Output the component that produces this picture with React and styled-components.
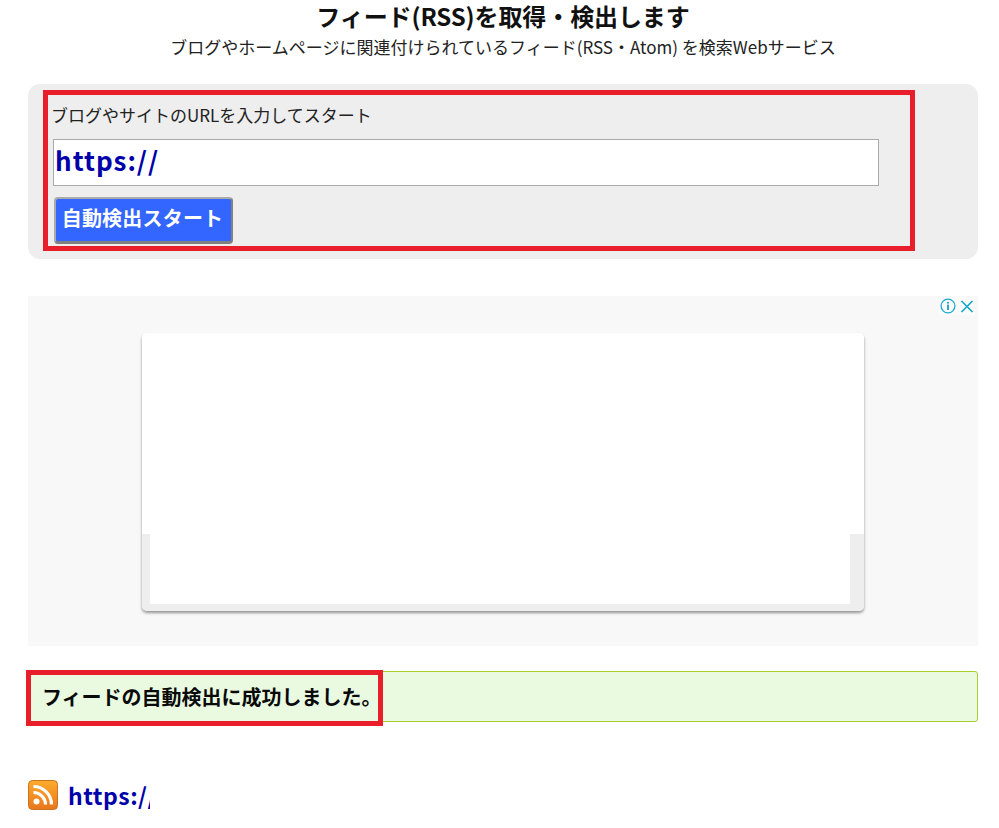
import React from 'react';
import styled, { createGlobalStyle } from 'styled-components';

const Global = createGlobalStyle`
  html, body { margin: 0; padding: 0; background: #fff; }
  body { font-family: "Noto Sans CJK JP", "Noto Sans", sans-serif; color: #111; }
`;

const Page = styled.div`
  width: 950px;
  margin-left: 28px;
  position: relative;
`;
const Header = styled.header`
  text-align: center;
  height: 84px;
`;
const Title = styled.h1`
  margin: 0;
  font-size: 24px;
  line-height: 32px;
  font-weight: 700;
  letter-spacing: -0.1px;
  color: #111;
`;
const Sub = styled.p`
  margin: 2px 0 0;
  font-size: 17px;
  line-height: 26px;
  color: #222;
`;
const FormPanel = styled.section`
  position: relative;
  height: 175px;
  box-sizing: border-box;
  background: #eee;
  border-radius: 12px;
  padding: 19px 99px 0 24px;
`;
const Label = styled.div`
  font-size: 17px;
  line-height: 24px;
  margin-left: -1px;
  color: #222;
`;
const UrlField = styled.div`
  margin: 12px 0 0 1px;
  height: 47px;
  box-sizing: border-box;
  border: 1px solid #aaa;
  background: #fff;
  padding-left: 1px;
  font-size: 26px;
  line-height: 40px;
  font-weight: 700;
  color: #0000aa;
  letter-spacing: 1px;
`;
const StartButton = styled.button`
  display: block;
  margin: 11px 0 0 2px;
  width: 179px;
  height: 47px;
  box-sizing: border-box;
  border: 2px solid #808080;
  border-top-color: #aaa;
  border-left-color: #aaa;
  border-bottom-width: 3px;
  border-radius: 4px;
  background: #3366ff;
  color: #fff;
  font-family: inherit;
  font-size: 20px;
  font-weight: 700;
  letter-spacing: 0.2px;
  padding: 0 2px 5px 0;
  text-align: center;
`;
const Mark = styled.div`
  position: absolute;
  box-sizing: border-box;
  border: 5px solid #e81f2b;
  pointer-events: none;
  left: ${p => p.$left}px;
  top: ${p => p.$top}px;
  width: ${p => p.$w}px;
  height: ${p => p.$h}px;
`;
const AdArea = styled.div`
  position: relative;
  margin-top: 37px;
  height: 350px;
  background: #f8f8f8;
  padding-top: 37px;
  box-sizing: border-box;
`;
const AdCard = styled.div`
  width: 722px;
  height: 278px;
  margin-left: 114px;
  box-sizing: border-box;
  background: #fff;
  border-radius: 5px;
  box-shadow: 0 2px 3px rgba(0,0,0,.4);
  position: relative;
  overflow: hidden;
  display: flex;
  flex-direction: column;
`;
const AdTop = styled.div`
  height: 201px;
  background: #fff;
`;
const AdFrame = styled.div`
  flex: 1;
  background: #eee;
  padding: 0 14px 7px 8px;
  display: flex;
`;
const AdInner = styled.div`
  flex: 1;
  background: #fff;
`;
const AdIcons = styled.div`
  position: absolute;
  top: 1px;
  right: 3px;
  display: flex;
  gap: 4px;
  align-items: center;
  background: rgba(255,255,255,.45);
  padding: 0 1px;
  height: 18px;
`;
const Alert = styled.div`
  margin-top: 25px;
  height: 51px;
  box-sizing: border-box;
  background: #e9fae0;
  border: 1px solid #a6cf2e;
  border-radius: 3px;
  padding-left: 13px;
  font-size: 20px;
  font-weight: 700;
  line-height: 50px;
  color: #0a0a0a;
`;
const FeedRow = styled.div`
  margin-top: 57px;
  display: flex;
  align-items: center;
  gap: 10px;
`;
const FeedLink = styled.a`
  display: block;
  width: 82px;
  overflow: hidden;
  white-space: nowrap;
  font-size: 23px;
  line-height: 30px;
  font-weight: 700;
  letter-spacing: 0.5px;
  color: #0000aa;
  margin-top: 1px;
`;

const RssIcon = () => (
  <svg width="30" height="30" viewBox="0 0 30 30">
    <defs>
      <linearGradient id="rssg" x1="0" y1="0" x2="0" y2="1">
        <stop offset="0" stopColor="#fcab2d" />
        <stop offset="1" stopColor="#e9761c" />
      </linearGradient>
    </defs>
    <rect x="0.5" y="0.5" width="29" height="29" rx="4" fill="url(#rssg)" stroke="#c9731c" />
    <circle cx="8.5" cy="21.5" r="3" fill="#fff" />
    <path d="M5.5 12.5a12 12 0 0 1 12 12" fill="none" stroke="#fff" strokeWidth="3.2" />
    <path d="M5.5 6.5a18 18 0 0 1 18 18" fill="none" stroke="#fff" strokeWidth="3.2" />
  </svg>
);

export default function App() {
  return (
    <Page>
      <Global />
      <Header>
        <Title>フィード(RSS)を取得・検出します</Title>
        <Sub>ブログやホームページに関連付けられているフィード(RSS・Atom) を検索Webサービス</Sub>
      </Header>
      <FormPanel>
        <Label>ブログやサイトのURLを入力してスタート</Label>
        <UrlField>https://</UrlField>
        <StartButton>自動検出スタート</StartButton>
        <Mark $left={15} $top={6} $w={872} $h={161} />
      </FormPanel>
      <AdArea>
        <AdCard>
          <AdTop />
          <AdFrame><AdInner /></AdFrame>
        </AdCard>
        <AdIcons>
          <svg width="16" height="16" viewBox="0 0 15 15">
            <circle cx="7.5" cy="7.5" r="6.5" fill="none" stroke="#16a9c9" strokeWidth="1.2" />
            <circle cx="7.5" cy="4.4" r="1" fill="#16a9c9" />
            <rect x="6.6" y="6.2" width="1.8" height="5" fill="#16a9c9" />
          </svg>
          <svg width="14" height="15" viewBox="0 0 14 15">
            <path d="M1.5 2 12.5 13M12.5 2 1.5 13" stroke="#16a9c9" strokeWidth="1.7" fill="none" />
          </svg>
        </AdIcons>
      </AdArea>
      <Alert>フィードの自動検出に成功しました。</Alert>
      <Mark $left={-2} $top={670} $w={357} $h={56} />
      <FeedRow>
        <RssIcon />
        <FeedLink>https://</FeedLink>
      </FeedRow>
    </Page>
  );
}
